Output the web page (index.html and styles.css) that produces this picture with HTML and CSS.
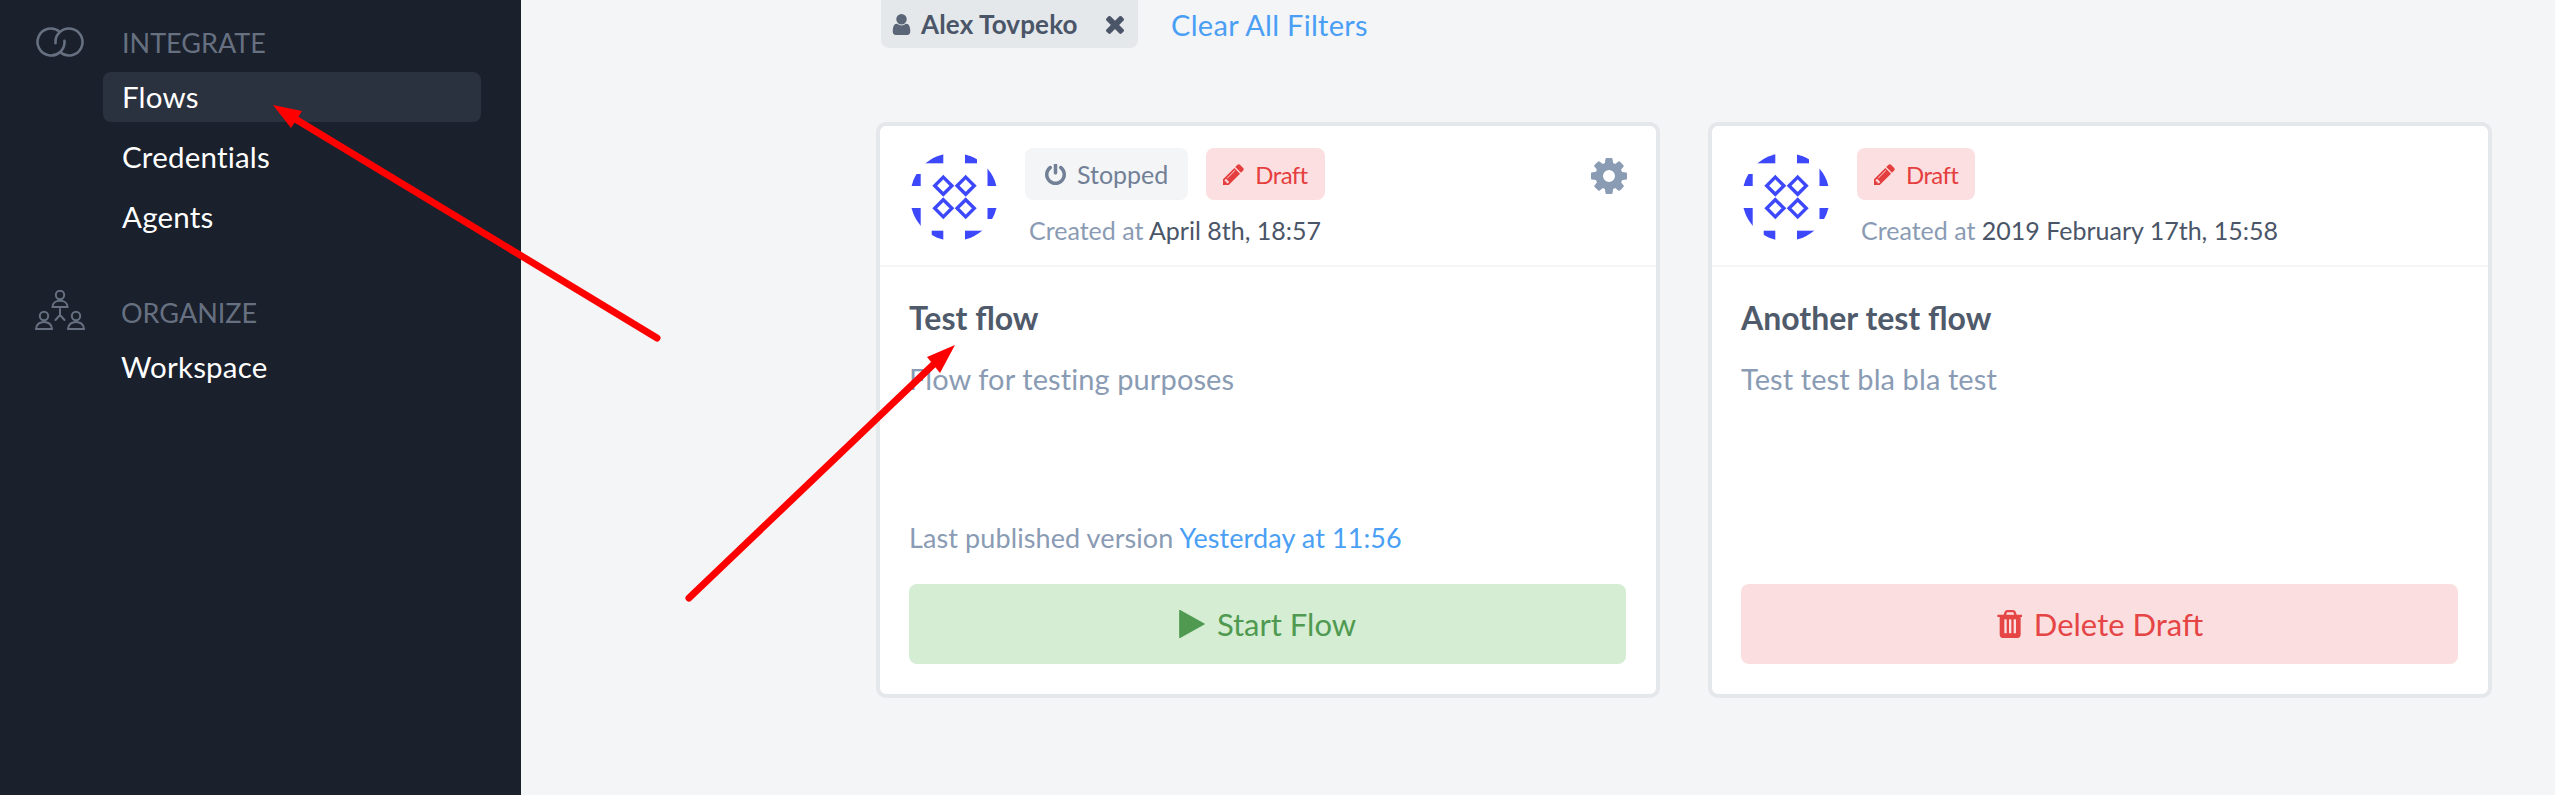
FILE: index.html
```html
<!DOCTYPE html>
<html lang="en">
<head>
    <meta charset="UTF-8">
    <title>Flows</title>
    <link rel="stylesheet" href="styles.css">
</head>
<body>
    <aside class="sidebar">
        <section class="nav-group">
            <svg class="nav-icon" viewBox="0 0 48 30" fill="none" stroke="currentColor" stroke-width="2.6" stroke-linecap="round">
                <path d="M23.7 4.66A13.5 13.5 0 1 0 28.45 13.8"/>
                <path d="M24.3 25.3A13.5 13.5 0 1 0 19.55 16.2"/>
            </svg>
            <div class="nav-body">
                <h3 class="nav-title">INTEGRATE</h3>
                <a class="nav-item active">Flows</a>
                <a class="nav-item">Credentials</a>
                <a class="nav-item">Agents</a>
            </div>
        </section>
        <section class="nav-group second">
            <svg class="nav-icon org" viewBox="0 0 50 40" fill="none" stroke="currentColor" stroke-width="2">
                <circle cx="25" cy="5" r="4.2"/>
                <path d="M17.5 17c0-8.500 15-8.500 15 0z"/>
                <path d="M25 19v6M25 25l-4.500 5M25 25l4.500 5" stroke-linecap="round"/>
                <circle cx="9" cy="26" r="4.2"/>
                <path d="M1 39c0-9.500 16-9.500 16 0z"/>
                <circle cx="41" cy="26" r="4.2"/>
                <path d="M33 39c0-9.500 16-9.500 16 0z"/>
            </svg>
            <div class="nav-body">
                <h3 class="nav-title">ORGANIZE</h3>
                <a class="nav-item">Workspace</a>
            </div>
        </section>
    </aside>

    <main class="content">
        <div class="filters">
            <span class="chip">
                <svg class="chip-user" viewBox="256 128 1280 1536"><path d="M1536 1399q0 109-62.5 187t-150.5 78h-854q-88 0-150.5-78t-62.5-187q0-85 8.5-160.5t31.5-152 58.5-131 94-89 134.5-34.5q131 128 313 128t313-128q76 0 134.5 34.5t94 89 58.5 131 31.5 152 8.5 160.5zm-256-887q0 159-112.5 271.5t-271.5 112.5-271.5-112.5-112.5-271.5 112.5-271.5 271.5-112.5 271.5 112.5 112.5 271.5z"/></svg>
                <span class="chip-name">Alex Tovpeko</span>
                <svg class="chip-x" viewBox="302 238 1188 1316"><path d="M1490 1322q0 40-28 68l-136 136q-28 28-68 28t-68-28l-294-294-294 294q-28 28-68 28t-68-28l-136-136q-28-28-28-68t28-68l294-294-294-294q-28-28-28-68t28-68l136-136q28-28 68-28t68 28l294 294 294-294q28-28 68-28t68 28l136 136q28 28 28 68t-28 68l-294 294 294 294q28 28 28 68z"/></svg>
            </span>
            <a class="clear-link">Clear All Filters</a>
        </div>

        <div class="cards">
            <article class="card">
                <header class="card-head">
                    <svg class="avatar" viewBox="0 0 88 88">
                        <use href="#avatarShape"/>
                    </svg>
                    <div class="card-meta">
                        <div class="badges">
                            <span class="badge stopped">
                                <svg class="badge-icon" viewBox="128 128 1536 1536"><path d="M1664 896q0 156-61 298t-164 245-245 164-298 61-298-61-245-164-164-245-61-298q0-182 80.5-343t226.5-270q43-32 95.5-25t83.5 50q32 42 24.5 94.5t-49.5 84.5q-98 74-151.5 181t-53.5 228q0 104 40.5 198.5t109.5 163.5 163.5 109.5 198.5 40.5 198.5-40.5 163.5-109.5 109.5-163.5 40.5-198.5q0-121-53.5-228t-151.5-181q-42-32-49.5-84.5t24.5-94.5q31-43 84-50t95 25q146 109 226.5 270t80.5 343zm-640-768v640q0 52-38 90t-90 38-90-38-38-90v-640q0-52 38-90t90-38 90 38 38 90z"/></svg>
                                Stopped
                            </span>
                            <span class="badge draft">
                                <svg class="badge-icon" viewBox="128 128 1536 1536"><use href="#pencilShape"/></svg>
                                Draft
                            </span>
                        </div>
                        <p class="created">Created at <span>April 8th, 18:57</span></p>
                    </div>
                    <svg class="gear" viewBox="128 128 1536 1536"><path d="M1152 896q0-106-75-181t-181-75-181 75-75 181 75 181 181 75 181-75 75-181zm512-109v222q0 12-8 23t-20 13l-185 28q-19 54-39 91 35 50 107 138 10 12 10 25t-9 23q-27 37-99 108t-94 71q-12 0-26-9l-138-108q-44 23-91 38-16 136-29 186-7 28-36 28h-222q-14 0-24.5-8.5t-11.5-21.5l-28-184q-49-16-90-37l-141 107q-10 9-25 9-14 0-25-11-126-114-165-168-7-10-7-23 0-12 8-23 15-21 51-66.5t54-70.5q-27-50-41-99l-183-27q-13-2-21-12.5t-8-23.5v-222q0-12 8-23t19-13l186-28q14-46 39-92-40-57-107-138-10-12-10-24 0-10 9-23 26-36 98.5-107.5t94.5-71.5q13 0 26 10l138 107q44-23 91-38 16-136 29-186 7-28 36-28h222q14 0 24.5 8.5t11.5 21.5l28 184q49 16 90 37l142-107q9-9 24-9 13 0 25 10 129 119 165 170 7 8 7 22 0 12-8 23-15 21-51 66.5t-54 70.5q26 50 41 98l183 28q13 2 21 12.5t8 23.5z"/></svg>
                </header>
                <div class="card-body">
                    <h2 class="flow-name">Test flow</h2>
                    <p class="flow-desc">Flow for testing purposes</p>
                    <p class="published">Last published version <a>Yesterday at 11:56</a></p>
                    <button class="action start">
                        <svg class="action-icon" viewBox="192 128 1408 1536"><path d="M1576 927l-1328 738q-23 13-39.5 3t-16.5-36v-1472q0-26 16.5-36t39.5 3l1328 738q23 13 23 31t-23 31z"/></svg>
                        Start Flow
                    </button>
                </div>
            </article>

            <article class="card">
                <header class="card-head">
                    <svg class="avatar" viewBox="0 0 88 88">
                        <use href="#avatarShape"/>
                    </svg>
                    <div class="card-meta">
                        <div class="badges">
                            <span class="badge draft">
                                <svg class="badge-icon" viewBox="128 128 1536 1536"><use href="#pencilShape"/></svg>
                                Draft
                            </span>
                        </div>
                        <p class="created">Created at <span>2019 February 17th, 15:58</span></p>
                    </div>
                </header>
                <div class="card-body">
                    <h2 class="flow-name">Another test flow</h2>
                    <p class="flow-desc">Test test bla bla test</p>
                    <button class="action delete">
                        <svg class="action-icon trash" viewBox="128 128 1408 1536"><path d="M704 1376v-704q0-14-9-23t-23-9h-64q-14 0-23 9t-9 23v704q0 14 9 23t23 9h64q14 0 23-9t9-23zm256 0v-704q0-14-9-23t-23-9h-64q-14 0-23 9t-9 23v704q0 14 9 23t23 9h64q14 0 23-9t9-23zm256 0v-704q0-14-9-23t-23-9h-64q-14 0-23 9t-9 23v704q0 14 9 23t23 9h64q14 0 23-9t9-23zm-544-992h448l-48-117q-7-9-17-11h-317q-10 2-17 11zm928 32v64q0 14-9 23t-23 9h-96v948q0 83-47 143.5t-113 60.5h-832q-66 0-113-58.5t-47-141.5v-952h-96q-14 0-23-9t-9-23v-64q0-14 9-23t23-9h309l70-167q15-37 54-63t79-26h320q40 0 79 26t54 63l70 167h309q14 0 23 9t9 23z"/></svg>
                        Delete Draft
                    </button>
                </div>
            </article>
        </div>
    </main>

    <!-- Shared shapes and the red arrows drawn on top of the screenshot -->
    <svg class="defs" width="0" height="0">
        <defs>
            <clipPath id="avatarClip"><circle cx="44" cy="44" r="44"/></clipPath>
            <g id="avatarShape">
                <g clip-path="url(#avatarClip)" fill="#3d48fa">
                    <rect x="10" y="0" width="23.3" height="10.3"/>
                    <rect x="55" y="0" width="12" height="10.3"/>
                    <rect x="77.5" y="14" width="10.5" height="19"/>
                    <rect x="0" y="21" width="10.7" height="12"/>
                    <rect x="0" y="55" width="10.7" height="18"/>
                    <rect x="77.5" y="55" width="10.5" height="11"/>
                    <rect x="21.7" y="77.7" width="11.6" height="10.3"/>
                    <rect x="55" y="77.7" width="20" height="10.3"/>
                </g>
                <g fill="none" stroke="#3d48fa" stroke-width="3.4">
                    <path d="M33.3 24.100l8.600 8.600-8.600 8.600-8.600-8.600z"/>
                    <path d="M55.7 24.100l8.600 8.600-8.600 8.600-8.600-8.600z"/>
                    <path d="M33.3 46.700l8.600 8.600-8.600 8.600-8.600-8.600z"/>
                    <path d="M55.7 46.700l8.600 8.600-8.600 8.600-8.600-8.600z"/>
                </g>
            </g>
            <path id="pencilShape" d="M491 1536l91-91-235-235-91 91v107h128v128h107zm523-928q0-22-22-22-10 0-17 7l-542 542q-7 7-7 17 0 22 22 22 10 0 17-7l542-542q7-7 7-17zm-54-192l416 416-832 832h-416v-416zm683 96q0 53-37 90l-166 166-416-416 166-165q36-38 90-38 53 0 91 38l235 234q37 39 37 91z"/>
        </defs>
    </svg>
    <svg class="arrows" viewBox="0 0 2555 795" fill="#fe0000" stroke="#fe0000" stroke-width="7" stroke-linecap="round">
        <line x1="657" y1="338" x2="292" y2="117"/>
        <polygon stroke="none" points="273,105 302,111 291,128"/>
        <line x1="689" y1="598" x2="936" y2="362"/>
        <polygon stroke="none" points="955,345 927,357 940,373"/>
    </svg>
</body>
</html>
```

FILE: styles.css
```css
* {
    margin: 0;
    padding: 0;
    box-sizing: border-box;
}

body {
    display: flex;
    height: 795px;
    overflow: hidden;
    font-family: "Lato", "Liberation Sans", sans-serif;
    background-color: #f4f5f7;
    color: #4a5568;
}

/* Sidebar */
.sidebar {
    flex: 0 0 521px;
    padding: 27px 40px 0 36px;
    background-color: #1a202c;
    color: #fff;
}

.nav-group {
    display: flex;
}

.nav-group.second {
    margin-top: 45px;
}

.nav-icon {
    flex: 0 0 48px;
    width: 48px;
    height: 30px;
    margin-right: 19px;
    color: #667080;
}

.nav-icon.org {
    flex-basis: 50px;
    width: 50px;
    height: 40px;
    margin-top: -7px;
    margin-right: 17px;
    margin-left: -1px;
}

.nav-body {
    flex: 1;
}

.nav-title {
    height: 32px;
    margin-bottom: 13px;
    padding-left: 19px;
    font-size: 27px;
    font-weight: 400;
    line-height: 32px;
    color: #667080;
}

.nav-item {
    display: block;
    height: 50px;
    margin-bottom: 10px;
    padding-left: 19px;
    border-radius: 8px;
    font-size: 29.5px;
    letter-spacing: 0.2px;
    line-height: 50px;
    color: #fff;
}

.nav-item.active {
    background-color: #2a323f;
}

/* Main column */
.content {
    flex: 1;
    padding-left: 355px;
}

.filters {
    display: flex;
    align-items: center;
    height: 48px;
    margin-left: 5px;
}

.chip {
    display: flex;
    align-items: center;
    width: 257px;
    height: 48px;
    padding: 0 13px 0 11px;
    border-radius: 0 0 8px 8px;
    background-color: #e5e8eb;
    color: #4a5568;
}

.chip-user {
    width: 19px;
    height: 21px;
    fill: #5a6577;
}

.chip-name {
    flex: 1;
    margin-left: 10px;
    font-size: 26px;
    font-weight: 700;
    letter-spacing: 0.15px;
}

.chip-x {
    width: 20px;
    height: 20px;
    fill: #4a5568;
}

.clear-link {
    margin-left: 33px;
    font-size: 29px;
    letter-spacing: 0.3px;
    color: #4a9ff5;
}

/* Cards */
.cards {
    display: grid;
    grid-template-columns: 784px 784px;
    gap: 48px;
    margin-top: 74px;
}

.card {
    display: flex;
    flex-direction: column;
    height: 576px;
    border: 4px solid #e5e8eb;
    border-radius: 10px;
    background-color: #fff;
}

.card-head {
    display: flex;
    height: 141px;
    padding: 22px 29px 0 30px;
    border-bottom: 2px solid #f4f5f7;
}

.avatar {
    flex: 0 0 88px;
    width: 88px;
    height: 88px;
    margin-top: 5px;
    margin-right: 27px;
}

.card-meta {
    flex: 1;
}

.badges {
    display: flex;
    gap: 18px;
}

.badge {
    display: flex;
    align-items: center;
    height: 52px;
    border-radius: 8px;
}

.badge.stopped {
    padding: 0 20px;
    font-size: 25px;
    background-color: #f4f5f7;
    color: #718096;
}

.badge.draft {
    padding: 0 17px;
    font-size: 24px;
    letter-spacing: -0.6px;
    background-color: #fce0e1;
    color: #e53e3e;
}

.badge-icon {
    width: 21px;
    height: 21px;
    margin-right: 11px;
    fill: currentColor;
}

.created {
    margin-top: 16px;
    margin-left: 4px;
    font-size: 25px;
    line-height: 28px;
    color: #8a9bb4;
}

.created span {
    color: #4a5568;
}

.gear {
    width: 36px;
    height: 36px;
    margin-top: 10px;
    fill: #8a9bb4;
}

.card-body {
    flex: 1;
    display: flex;
    flex-direction: column;
    padding: 33px 30px 30px 29px;
}

.flow-name {
    font-size: 32px;
    font-weight: 700;
    line-height: 36px;
    color: #4f5a6b;
}

.flow-desc {
    margin-top: 25px;
    font-size: 29px;
    letter-spacing: 0.1px;
    line-height: 36px;
    color: #8a9bb4;
}

.published {
    margin-top: auto;
    font-size: 27px;
    letter-spacing: 0.1px;
    line-height: 36px;
    color: #8a9bb4;
}

.published a {
    color: #4a9ff5;
}

.action {
    display: flex;
    align-items: center;
    justify-content: center;
    width: 100%;
    height: 80px;
    margin-top: 28px;
    border: 0;
    border-radius: 8px;
    font-family: inherit;
    font-size: 31px;
}

.card-body > .flow-desc + .action {
    margin-top: auto;
}

.action.start {
    background-color: #d4edd3;
    color: #4f9a50;
}

.action.delete {
    background-color: #fbdfe0;
    color: #e54545;
}

.action-icon {
    width: 26px;
    height: 28px;
    margin-right: 12px;
    fill: currentColor;
}

/* Overlay */
.defs {
    position: absolute;
}

.arrows {
    position: absolute;
    top: 0;
    left: 0;
    width: 2555px;
    height: 795px;
    pointer-events: none;
}
```
